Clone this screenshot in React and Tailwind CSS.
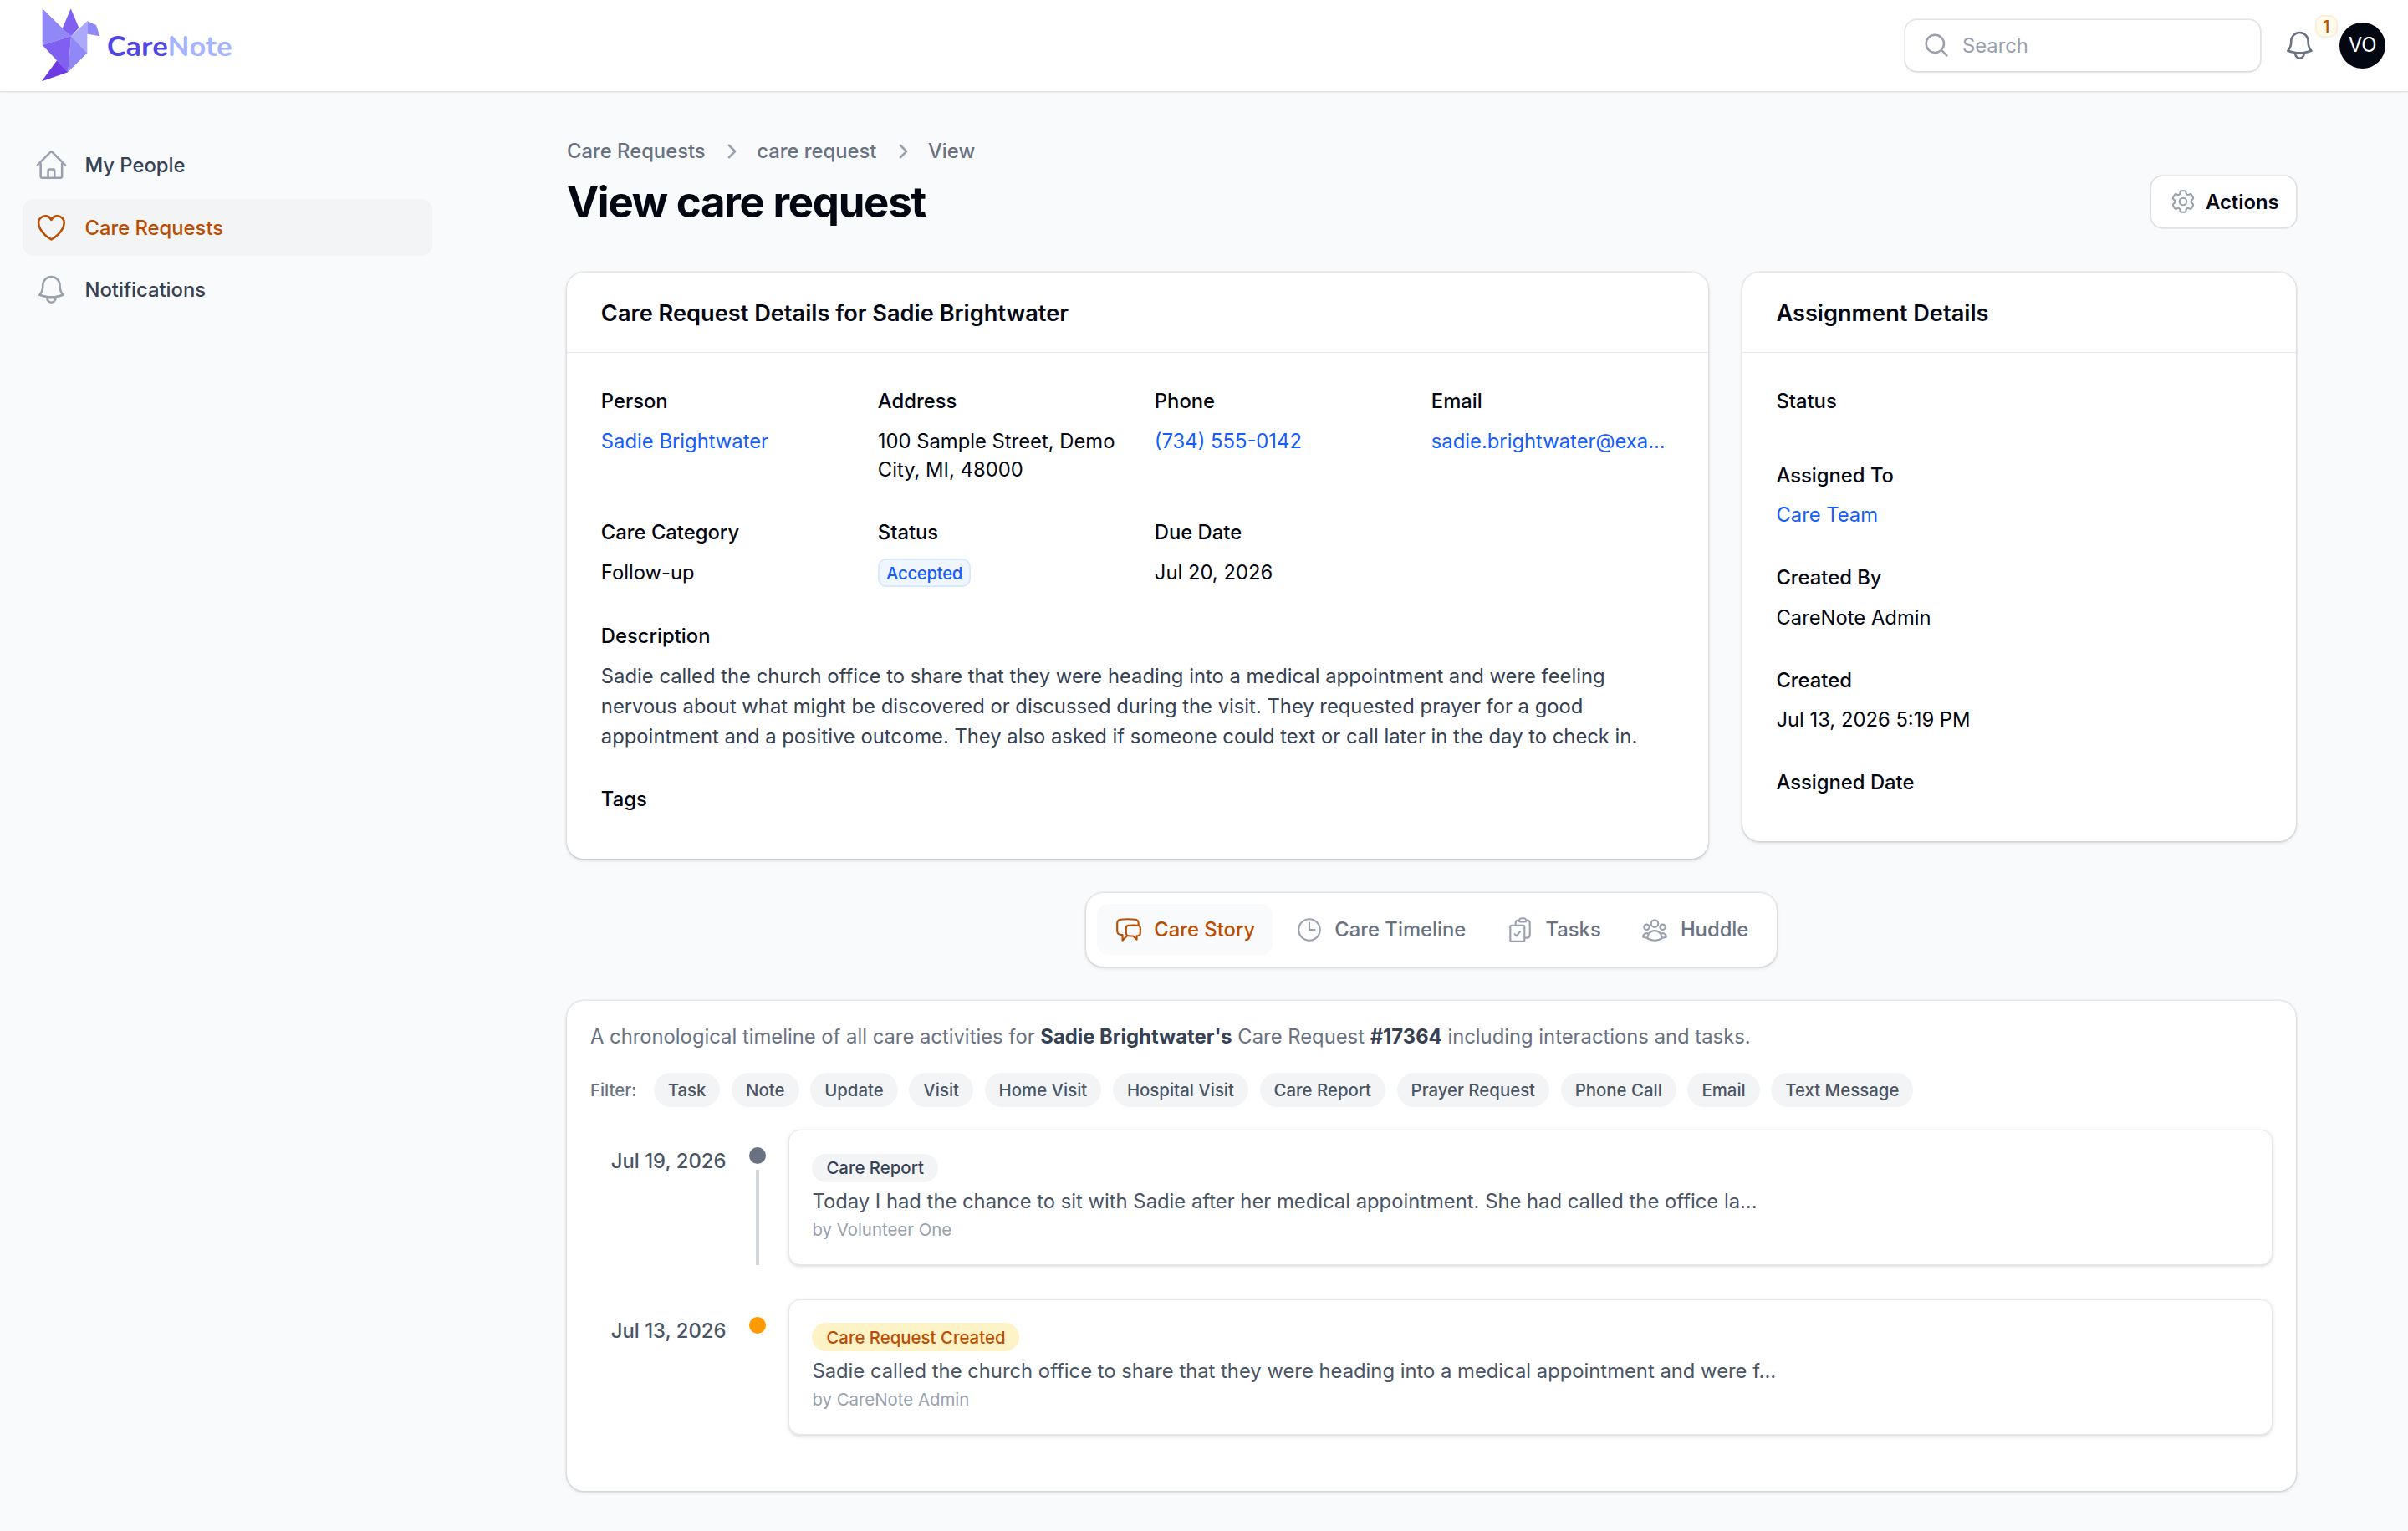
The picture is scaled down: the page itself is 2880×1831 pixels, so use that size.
import {
  HiOutlineHome,
  HiOutlineHeart,
  HiOutlineBell,
  HiOutlineClock,
  HiOutlineChatBubbleLeftRight,
  HiOutlineClipboardDocumentCheck,
  HiOutlineUserGroup,
  HiOutlineCog6Tooth,
  HiMiniChevronRight,
  HiMiniMagnifyingGlass,
} from "react-icons/hi2";

const DESCRIPTION =
  "Sadie called the church office to share that they were heading into a medical appointment and were feeling nervous about what might be discovered or discussed during the visit. They requested prayer for a good appointment and a positive outcome. They also asked if someone could text or call later in the day to check in.";

const FILTERS = [
  "Task", "Note", "Update", "Visit", "Home Visit", "Hospital Visit",
  "Care Report", "Prayer Request", "Phone Call", "Email", "Text Message",
];

function Logo() {
  return (
    <div className="flex items-center">
      <svg viewBox="150 33 210 264" className="h-[51.8px] w-[41.2px]">
        <polygon points="152,34 225,105 255,133 152,165" fill="#9188f8" />
        <polygon points="254,34 283,103 255,133 224,105" fill="#7f60f1" />
        <polygon points="313,79 313,193 255,133" fill="#aaa9fb" />
        <polygon points="313,79 345,93 358,133 313,125" fill="#9188f8" />
        <polygon points="255,133 313,193 244,262" fill="#9188f8" />
        <polygon points="152,165 255,133 249,200 244,262 204,220" fill="#7f60f1" />
        <polygon points="204,220 244,262 149,295" fill="#6d3ae4" />
      </svg>
      <span className="ml-[4.6px] mt-[2px] font-['Nunito','Lato',sans-serif] text-[20.2px] font-bold leading-none text-[#5046e5]">
        Care<span className="text-[#a5b4fc]">Note</span>
      </span>
    </div>
  );
}

function Topbar() {
  return (
    <header className="flex h-16 items-center justify-between bg-white pl-[29.2px] pr-4 shadow-xs ring-1 ring-gray-950/5">
      <Logo />
      <div className="flex items-center gap-4">
        <div className="flex h-9 w-[249.6px] items-center gap-2 rounded-lg bg-white pl-3 shadow-xs ring-1 ring-gray-950/10">
          <HiMiniMagnifyingGlass className="size-5 text-gray-400" />
          <span className="pt-px text-sm text-gray-400">Search</span>
        </div>
        <div className="relative flex size-6 items-center justify-center">
          <HiOutlineBell className="size-6 text-gray-500" />
          <span className="absolute left-[22.5px] top-[-9.4px] flex h-4 w-4 items-center justify-center rounded-md bg-amber-50 text-xs font-medium text-[#bb4d00] ring-1 ring-inset ring-amber-600/10">1</span>
        </div>
        <div className="flex size-8 items-center justify-center rounded-full bg-gray-950 text-sm text-white">VO</div>
      </div>
    </header>
  );
}

function NavItem({ icon: Icon, label, active }) {
  return (
    <a className={"flex items-center gap-[11.7px] rounded-lg p-2 " + (active ? "bg-gray-100" : "")}>
      <Icon className={"size-6 " + (active ? "text-[#bb4d00]" : "text-gray-400")} />
      <span className={"pt-[0.8px] text-sm font-medium " + (active ? "text-[#bb4d00]" : "text-gray-700")}>{label}</span>
    </a>
  );
}

function Card({ title, className = "", children }) {
  return (
    <section className={"rounded-xl bg-white shadow-sm ring-1 ring-gray-950/5 " + className}>
      <h3 className="px-6 pb-[14.5px] pt-[17px] text-base font-semibold leading-6 text-gray-950">{title}</h3>
      <div className="border-t border-gray-200 px-6 pb-[23.5px] pt-[24.5px]">{children}</div>
    </section>
  );
}

function Field({ label, className = "", children }) {
  return (
    <div className={"grid content-start gap-y-2 text-sm leading-5 " + className}>
      <div className="font-medium text-gray-950">{label}</div>
      {children ?? <div />}
    </div>
  );
}

function Tab({ icon: Icon, label, active }) {
  return (
    <div className={"flex items-center gap-x-2 rounded-lg px-3 py-2 text-sm font-medium " + (active ? "bg-gray-50 text-[#bb4d00]" : "text-gray-500")}>
      <Icon className={"size-5 " + (active ? "text-[#bb4d00]" : "text-gray-400")} />
      {label}
    </div>
  );
}

function Entry({ date, dot, badge, badgeClass, text, by, line }) {
  return (
    <div className="flex">
      <div className="w-[95.6px] pt-3 text-right text-sm font-medium leading-5 text-gray-600">{date}</div>
      <div className="ml-4 flex w-3 flex-col items-center pt-3">
        <div className={"size-3 rounded-full " + dot} />
        {line && <div className="mt-1 w-[2.4px] flex-1 bg-gray-300" />}
      </div>
      <div className="ml-4 h-[95px] flex-1 rounded-lg border border-gray-200 bg-white p-4 shadow-sm">
        <span className={"flex h-5 w-fit items-center rounded-full px-2.5 text-xs font-medium " + badgeClass}>{badge}</span>
        <p className="mt-1 text-sm leading-5 text-gray-600">{text}</p>
        <p className="mt-[1.5px] text-xs leading-4 text-gray-400">{by}</p>
      </div>
    </div>
  );
}

export default function App() {
  return (
    <div className="h-[1077.1px] w-[1694.1px] overflow-hidden bg-gray-50 font-['Inter',sans-serif] text-gray-950 antialiased [zoom:1.7]">
      <Topbar />
      <div className="flex">
        <nav className="flex w-80 shrink-0 flex-col gap-y-1 px-4 py-8">
          <NavItem icon={HiOutlineHome} label="My People" />
          <NavItem icon={HiOutlineHeart} label="Care Requests" active />
          <NavItem icon={HiOutlineBell} label="Notifications" />
        </nav>

        <main className="mx-auto w-[1216.4px] pt-8">
          <div className="flex items-center justify-between">
            <div>
              <div className="flex h-5 items-center gap-x-[8.1px] pt-px text-sm font-medium leading-5 text-gray-500">
                <span>Care Requests</span>
                <HiMiniChevronRight className="size-5 text-gray-400" />
                <span>care request</span>
                <HiMiniChevronRight className="size-5 text-gray-400" />
                <span>View</span>
              </div>
              <h1 className="mt-2 text-3xl font-bold leading-9 tracking-tight">View care request</h1>
            </div>
            <button className="mt-7 flex h-9 items-center gap-1.5 rounded-lg bg-white px-3 text-sm font-semibold ring-1 ring-gray-950/10">
              <HiOutlineCog6Tooth className="size-5 text-gray-400" />
              <span className="pt-[0.6px]">Actions</span>
            </button>
          </div>

          <div className="mt-8 flex items-start gap-6">
            <Card title="Care Request Details for Sadie Brightwater" className="w-[802.8px]">
              <div className="grid grid-cols-4 gap-x-6 gap-y-6">
                <Field label="Person"><a className="text-blue-600">Sadie Brightwater</a></Field>
                <Field label="Address"><span>100 Sample Street, Demo City, MI, 48000</span></Field>
                <Field label="Phone"><a className="text-blue-600">(734) 555-0142</a></Field>
                <Field label="Email"><a className="text-blue-600">sadie.brightwater@exa...</a></Field>
                <Field label="Care Category"><span className="leading-[21px]">Follow-up</span></Field>
                <Field label="Status">
                  <span className="mt-[0.5px] flex w-fit items-center rounded-md bg-blue-50 px-1.5 py-0.5 text-xs font-medium leading-4 tracking-[-0.2px] text-blue-600 ring-1 ring-inset ring-blue-600/10">Accepted</span>
                </Field>
                <Field label="Due Date" className="col-span-2"><span className="leading-[21px]">Jul 20, 2026</span></Field>
                <Field label="Description" className="col-span-4"><p className="leading-[21px] text-gray-700">{DESCRIPTION}</p></Field>
                <Field label="Tags" className="col-span-4" />
              </div>
            </Card>
            <Card title="Assignment Details" className="flex-1">
              <div className="grid gap-y-6">
                <Field label="Status" />
                <Field label="Assigned To"><a className="text-blue-600">Care Team</a></Field>
                <Field label="Created By"><span>CareNote Admin</span></Field>
                <Field label="Created"><span>Jul 13, 2026 5:19 PM</span></Field>
                <Field label="Assigned Date" />
              </div>
            </Card>
          </div>

          <div className="mx-auto mt-6 flex w-fit gap-x-1 rounded-xl bg-white p-2 shadow-sm ring-1 ring-gray-950/5">
            <Tab icon={HiOutlineChatBubbleLeftRight} label="Care Story" active />
            <Tab icon={HiOutlineClock} label="Care Timeline" />
            <Tab icon={HiOutlineClipboardDocumentCheck} label="Tasks" />
            <Tab icon={HiOutlineUserGroup} label="Huddle" />
          </div>

          <section className="mt-6 h-[345px] rounded-xl bg-white px-[16.4px] pb-4 pt-[15.5px] shadow-sm ring-1 ring-gray-950/5">
            <p className="text-sm leading-5 text-gray-500">
              A chronological timeline of all care activities for <b className="font-bold text-gray-700">Sadie Brightwater's</b> Care Request{" "}
              <b className="font-bold text-gray-700">#17364</b> including interactions and tasks.
            </p>
            <div className="mt-[15.4px] flex items-center gap-2 text-xs font-medium">
              <span className="mr-1 text-gray-500">Filter:</span>
              {FILTERS.map((f) => (
                <span key={f} className="rounded-full bg-gray-100 px-2.5 py-1 leading-4 text-gray-600">{f}</span>
              ))}
            </div>
            <div className="mt-4 flex flex-col gap-[24.4px]">
              <Entry
                date="Jul 19, 2026" dot="bg-gray-500" line
                badge="Care Report" badgeClass="bg-gray-100 text-gray-700"
                text="Today I had the chance to sit with Sadie after her medical appointment. She had called the office la..."
                by="by Volunteer One"
              />
              <Entry
                date="Jul 13, 2026" dot="bg-amber-500"
                badge="Care Request Created" badgeClass="bg-amber-100 text-[#bb4d00]"
                text="Sadie called the church office to share that they were heading into a medical appointment and were f..."
                by="by CareNote Admin"
              />
            </div>
          </section>
        </main>
      </div>
    </div>
  );
}
